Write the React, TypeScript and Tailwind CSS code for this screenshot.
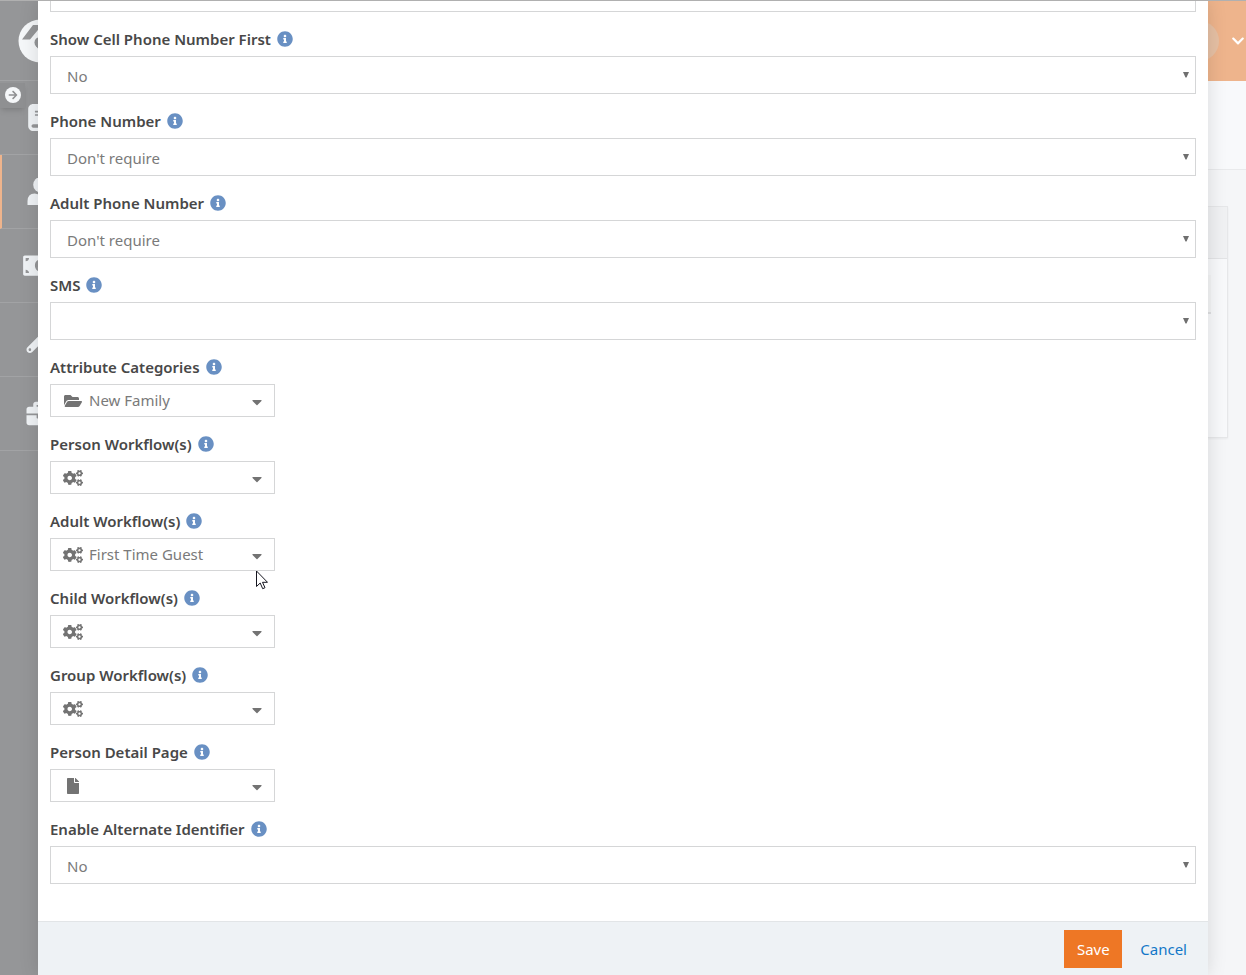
import React, { useId } from "react";
import {
  FaArrowRight,
  FaBook,
  FaBriefcase,
  FaCaretDown,
  FaChevronDown,
  FaCogs,
  FaFile,
  FaFolderOpen,
  FaInfoCircle,
  FaMoneyBillAlt,
  FaWrench,
} from "react-icons/fa";

type IconProps = { className?: string };

function PersonIcon({ className }: IconProps) {
  return (
    <svg viewBox="0 0 26 26" className={className} fill="currentColor" aria-hidden="true">
      <circle cx="13" cy="6.500" r="7.500" />
      <path d="M0 26.500v-4q0-7.500 7-7.500 6 2 12 0 7 0 7 7.500v4z" />
    </svg>
  );
}

const navItems = [
  { label: "Intranet", icon: FaBook, active: false },
  { label: "People", icon: PersonIcon, active: true },
  { label: "Finance", icon: FaMoneyBillAlt, active: false },
  { label: "Admin Tools", icon: FaWrench, active: false },
  { label: "Tools", icon: FaBriefcase, active: false },
];

function Logo() {
  return (
    <svg viewBox="0 0 44 44" className="size-11" aria-hidden="true">
      <circle cx="22" cy="22" r="21.500" fill="#f5f7f9" />
      <path d="M4 20.500 15 6h14l11 14.500h-7L22 8.500 12 20.500z" fill="#959698" />
      <circle cx="22" cy="23.500" r="5.500" fill="#959698" />
      <path d="M18 27l8-1 6 10h-7z" fill="#959698" />
    </svg>
  );
}

function Sidebar() {
  return (
    <nav aria-label="Main" className="relative w-20 shrink-0 bg-[#959698]">
      <div className="flex h-20 items-center justify-center pt-px">
        <Logo />
      </div>
      <ul className="border-t border-[#a2a3a5]">
        {navItems.map(({ label, icon: Icon, active }) => (
          <li
            key={label}
            className={
              active
                ? "h-[74px] border-b border-l-2 border-b-[#a2a3a5] border-l-[#efb48c]"
                : "h-[74px] border-b border-b-[#a2a3a5]"
            }
          >
            <a
              href="#"
              aria-label={label}
              className="flex h-full items-center justify-center text-[#f0f3f6]"
            >
              <Icon className="h-[27px] w-[34px]" />
            </a>
          </li>
        ))}
      </ul>
      <button
        type="button"
        aria-label="Expand menu"
        className="absolute top-[83px] left-0 flex h-[25px] w-[25px] items-center justify-center bg-[#8f9092] pb-px shadow-md"
      >
        <span className="flex size-4 items-center justify-center rounded-full bg-[#f5f7f9] text-[10px] text-[#8f9092]">
          <FaArrowRight />
        </span>
      </button>
    </nav>
  );
}

function PageBehind() {
  return (
    <div className="absolute inset-0 flex">
      <Sidebar />
      <div className="flex flex-1 flex-col bg-[#f5f6f8]">
        <header className="flex h-[81px] items-center justify-end gap-3 bg-[#eeb48c] pr-px">
          <span className="size-10 rounded-full bg-[#e6c0a4]" />
          <button type="button" aria-label="Account menu" className="text-sm text-white">
            <FaChevronDown />
          </button>
        </header>
        <div className="h-[89px] border-b border-[#e9eaec] bg-[#f8f9fb]" />
        <section className="mx-[18px] mt-9 h-[232px] border border-[#e6e7e9] bg-[#f8f9fb] shadow-xs">
          <div className="h-[52px] border-b border-[#e3e4e6] bg-[#f0f1f3]" />
          <div className="mx-4 mt-4 h-[39px] border-b-2 border-[#dfe0e2] bg-[#f4f5f6]" />
        </section>
      </div>
    </div>
  );
}

function FieldLabel({ id, text }: { id: string; text: string }) {
  return (
    <div className="mb-[9px] flex h-4 items-center gap-1.5">
      <label htmlFor={id} className="text-[15px] leading-4 font-semibold text-[#484848]">
        {text}
      </label>
      <FaInfoCircle className="size-4 text-[#6990c3]" />
    </div>
  );
}

function SelectBox({ id, value, label }: { id?: string; value: string; label?: string }) {
  return (
    <div className="relative">
      <select
        id={id}
        aria-label={label}
        className="block h-[38px] w-full appearance-none border border-[#d5d6d7] bg-white px-4 pt-0.5 text-[15px] text-[#7a7a7a]"
      >
        <option>{value}</option>
      </select>
      <svg
        viewBox="0 0 6 6"
        className="pointer-events-none absolute top-4 right-[7px] size-1.5"
        aria-hidden="true"
      >
        <path d="M0 0h6L3.500 5.500h-1z" fill="#6f6f6f" />
      </svg>
    </div>
  );
}

function SelectField({ label, value }: { label: string; value: string }) {
  const id = useId();
  return (
    <div>
      <FieldLabel id={id} text={label} />
      <SelectBox id={id} value={value} />
    </div>
  );
}

function PickerField({
  label,
  value,
  icon: Icon,
}: {
  label: string;
  value?: string;
  icon: React.ComponentType<IconProps>;
}) {
  const id = useId();
  return (
    <div>
      <FieldLabel id={id} text={label} />
      <button
        id={id}
        type="button"
        className="flex h-[33px] w-[225px] items-center border border-[#d5d6d7] bg-white px-3 text-[15px] text-[#7a7a7a]"
      >
        <Icon className="h-4 w-5 text-[#737373]" />
        <span className="ml-1.5 flex-1 text-left">{value}</span>
        <FaCaretDown className="mt-0.5 h-4 w-2.5 text-[#737373]" />
      </button>
    </div>
  );
}

function Cursor() {
  return (
    <svg viewBox="0 0 12 20" className="absolute top-[570px] left-[218px] h-5 w-3" aria-hidden="true">
      <path
        d="M.5 1v15.500l3.700-3.500 2.500 5.700 2.300-1-2.500-5.400h5z"
        fill="#fff"
        stroke="#15151f"
        strokeWidth="1"
      />
    </svg>
  );
}

export default function App() {
  return (
    <div className="relative h-screen overflow-hidden font-['Noto_Sans',sans-serif]">
      <PageBehind />
      <div
        role="dialog"
        aria-label="Block settings"
        className="relative mx-[38px] flex h-full flex-col bg-white shadow-[0_0_18px_rgba(0,0,0,0.13)]"
      >
        <div className="flex min-h-0 flex-1 flex-col gap-[19px] overflow-hidden px-3 pt-px">
          <div className="-mt-[27px]">
            <SelectBox value="" label="Setting" />
          </div>
          <SelectField label="Show Cell Phone Number First" value="No" />
          <SelectField label="Phone Number" value="Don't require" />
          <SelectField label="Adult Phone Number" value="Don't require" />
          <SelectField label="SMS" value="" />
          <PickerField label="Attribute Categories" value="New Family" icon={FaFolderOpen} />
          <PickerField label="Person Workflow(s)" icon={FaCogs} />
          <PickerField label="Adult Workflow(s)" value="First Time Guest" icon={FaCogs} />
          <PickerField label="Child Workflow(s)" icon={FaCogs} />
          <PickerField label="Group Workflow(s)" icon={FaCogs} />
          <PickerField label="Person Detail Page" icon={FaFile} />
          <SelectField label="Enable Alternate Identifier" value="No" />
        </div>
        <footer className="flex shrink-0 items-center justify-end border-t border-[#e2e5e7] bg-[#eef2f5] px-[9px] pt-2 pb-[7px] text-[15px]">
          <button type="button" className="h-[38px] w-[58px] bg-[#ee7725] text-white">
            Save
          </button>
          <button type="button" className="ml-1.5 h-[38px] px-3 text-[#1278c8]">
            Cancel
          </button>
        </footer>
        <Cursor />
      </div>
      <div className="absolute inset-x-0 top-0 h-px bg-[#b0b0b0]" />
    </div>
  );
}
